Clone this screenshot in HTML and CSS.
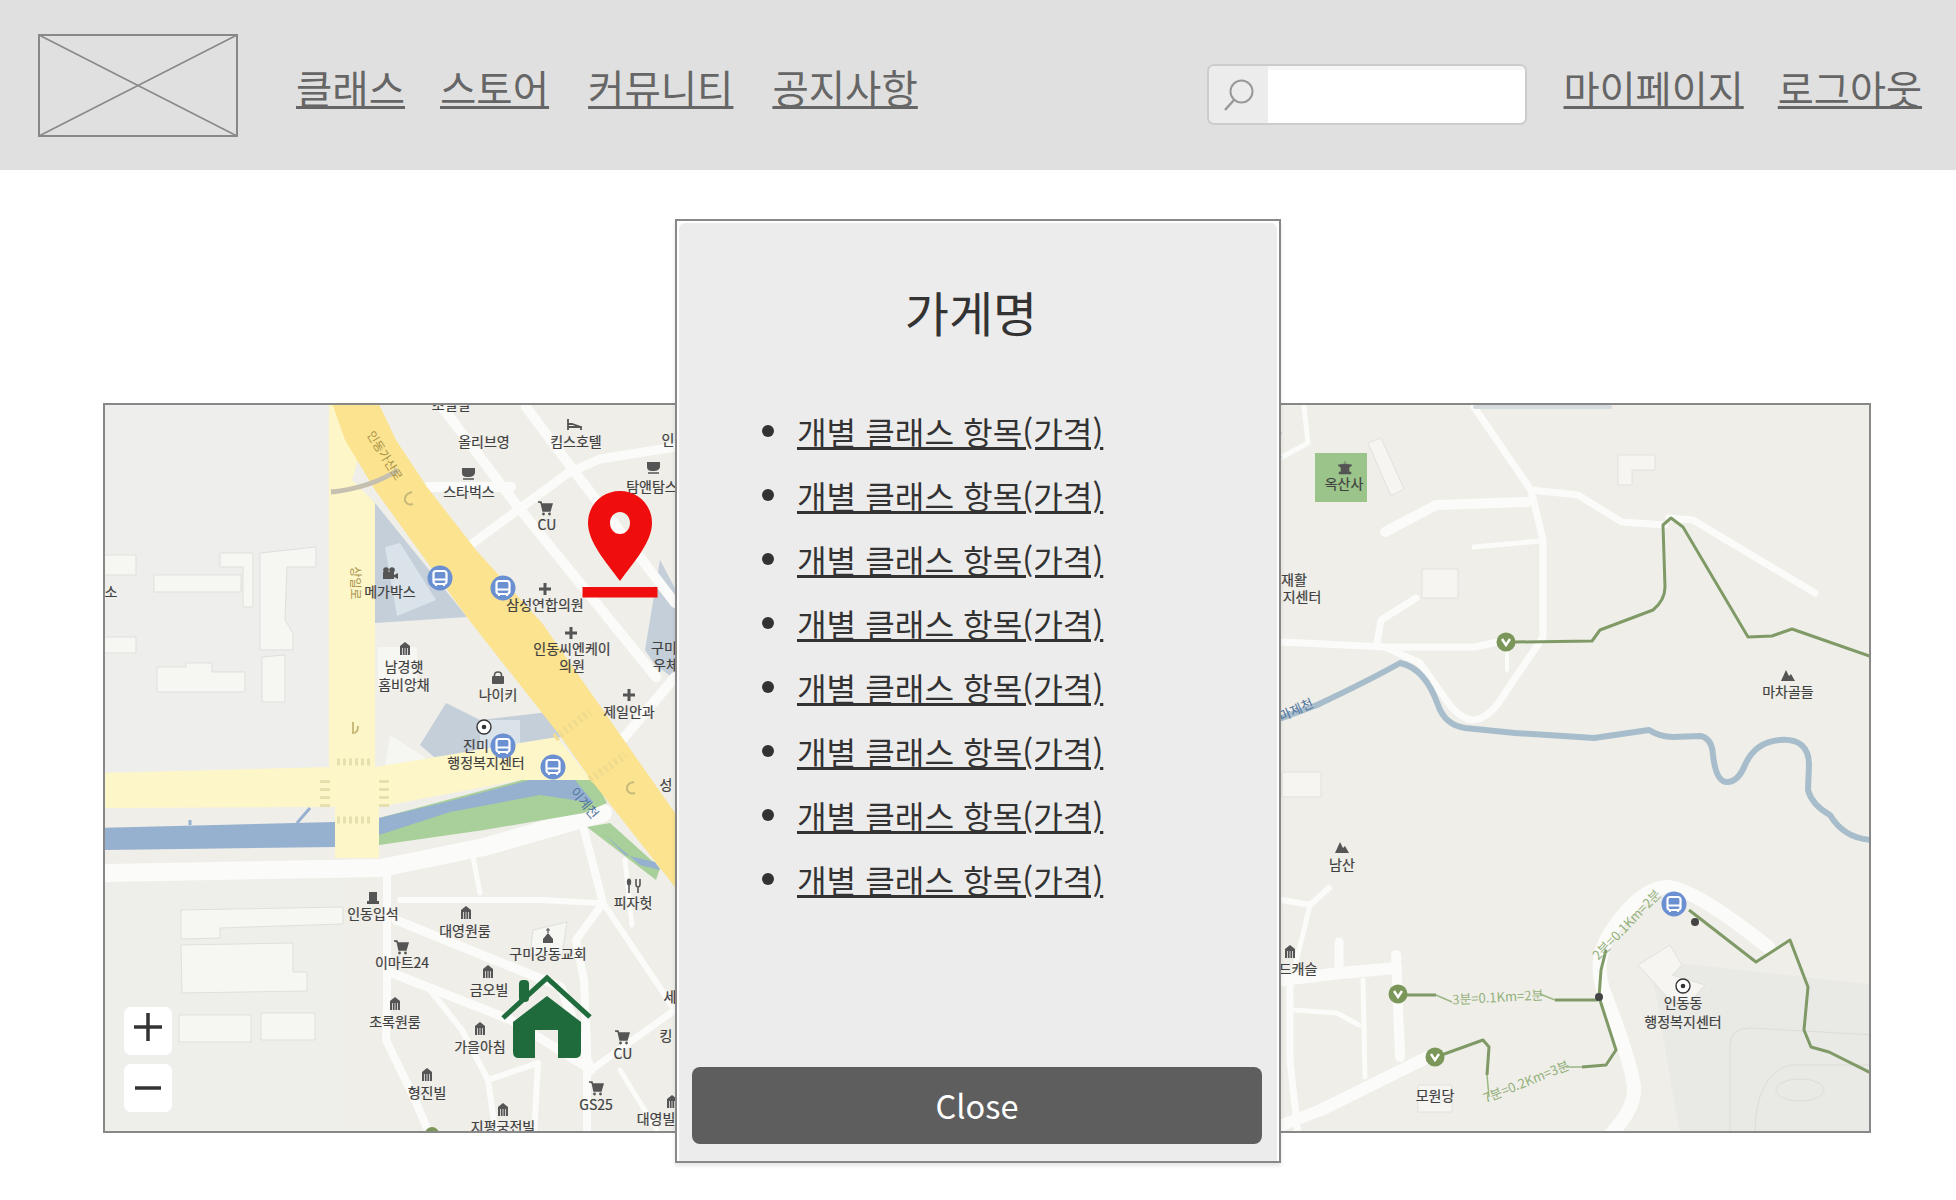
FILE: index.html
```html
<!DOCTYPE html>
<html lang="ko">
<head>
  <meta charset="UTF-8" />
  <meta name="viewport" content="width=device-width, initial-scale=1.0"/>
  <title>클래스 지도</title>
  <link rel="stylesheet" href="styles.css">
</head>
<body>

  <header class="topbar">
    <a class="logo" href="#">
      <svg viewBox="0 0 200 103" preserveAspectRatio="none">
        <rect x="1" y="1" width="198" height="101" fill="none" stroke="#888" stroke-width="2"/>
        <path d="M1 1 L199 102 M199 1 L1 102" stroke="#888" stroke-width="1.5"/>
      </svg>
    </a>
    <nav class="main-nav">
      <a href="#">클래스</a>
      <a href="#">스토어</a>
      <a href="#">커뮤니티</a>
      <a href="#">공지사항</a>
    </nav>
    <div class="search">
      <span class="search-icon">
        <svg width="36" height="36" viewBox="0 0 36 36">
          <circle cx="21.5" cy="14.5" r="11" fill="none" stroke="#999" stroke-width="2"/>
          <path d="M14 23 L5 33" stroke="#999" stroke-width="2.5"/>
        </svg>
      </span>
      <input class="search-input" type="text" />
    </div>
    <nav class="user-nav">
      <a href="#">마이페이지</a>
      <a href="#">로그아웃</a>
    </nav>
  </header>

  <main class="content">
    <div class="map">
      <svg class="map-img" viewBox="105 405 1764 726">
        <defs>
          <g id="ic-bus">
            <circle r="12.5" fill="#6b90d2"/>
            <rect x="-6.5" y="-7" width="13" height="13" rx="2.5" fill="none" stroke="#fff" stroke-width="2.2"/>
            <path d="M-6 1.5 H6" stroke="#fff" stroke-width="2"/>
            <path d="M-5 7 H-3 M3 7 H5" stroke="#fff" stroke-width="2"/>
          </g>
          <g id="ic-house">
            <path d="M0 -7 L5 -3 V6 H-5 V-3 Z" fill="#555"/>
            <path d="M-2.5 -1 V6 M0 -1 V6 M2.5 -1 V6" stroke="#eee" stroke-width="0.8"/>
          </g>
          <g id="ic-plus">
            <path d="M0 -6 V6 M-6 0 H6" stroke="#555" stroke-width="3"/>
          </g>
          <g id="ic-cart">
            <path d="M-7 -6 H-4 L-2 3 H5 L7 -4 H-3" fill="#555" stroke="#555" stroke-width="1.5"/>
            <circle cx="-1.5" cy="6" r="1.4" fill="#555"/>
            <circle cx="4.5" cy="6" r="1.4" fill="#555"/>
          </g>
          <g id="ic-cup">
            <path d="M-7 -5 H6 V0 Q5 4 0 4 H-2 Q-7 4 -7 0 Z" fill="#555"/>
            <path d="M-6 6 H5" stroke="#555" stroke-width="1.5"/>
          </g>
          <g id="ic-target">
            <circle r="7" fill="#fff" stroke="#333" stroke-width="1.4"/>
            <circle r="2.3" fill="#333"/>
          </g>
          <g id="ic-peak">
            <path d="M-7 5 L-2 -6 L1 0 L3 -2 L7 5 Z" fill="#555"/>
          </g>
          <g id="ic-stop">
            <circle r="9.5" fill="#7a9659"/>
            <path d="M-4 -3 L0 3 L4 -3" fill="none" stroke="#fff" stroke-width="2.4"/>
          </g>
          <g id="ic-bed">
            <path d="M-6 -6 V5 M-6 2 H7 V5 M-6 -1 H-2 L7 2" fill="none" stroke="#555" stroke-width="1.8"/>
          </g>
          <g id="ic-camera">
            <circle cx="-4" cy="-4" r="2.8" fill="#555"/>
            <circle cx="2" cy="-4" r="2.8" fill="#555"/>
            <rect x="-7" y="-2" width="11" height="7" fill="#555"/>
            <path d="M4 1 L8 -1 V5 L4 3 Z" fill="#555"/>
          </g>
          <g id="ic-fork">
            <path d="M-4 -7 V7 M3 -7 V-2 Q3 1 5 1 Q7 1 7 -2 V-7 M5 1 V7" fill="none" stroke="#555" stroke-width="1.6"/>
            <ellipse cx="-4" cy="-4" rx="2.2" ry="3.5" fill="#555"/>
          </g>
          <g id="ic-stone">
            <path d="M-4 -6 H4 V3 H-4 Z M-6 3 H6 V6 H-6 Z" fill="#555"/>
          </g>
          <g id="ic-church">
            <path d="M0 -9 V-4 M-2 -7 H2" stroke="#555" stroke-width="1.2"/>
            <path d="M0 -4 L5 2 V6 H-5 V2 Z" fill="#555"/>
          </g>
          <g id="ic-shop">
            <path d="M-3.5 -2 V-3 Q-3.5 -6 0 -6 Q3.5 -6 3.5 -3 V-2" fill="none" stroke="#555" stroke-width="1.6"/>
            <rect x="-6" y="-2" width="12" height="8" rx="1" fill="#555"/>
          </g>
          <g id="ic-temple">
            <path d="M-7 -3 Q0 -5 7 -3 L5 -1 H-5 Z M-4 -1 H4 V4 H-4 Z M-6 4 H6 V6 H-6 Z M0 -7 V-4" fill="#555" stroke="#555" stroke-width="0.6"/>
          </g>
        </defs>

        <rect x="100" y="400" width="1775" height="735" fill="#efeee8"/>

        <!-- left blocks -->
        <path d="M100 400 H327 V764 Q327 772 319 772 L100 774 Z" fill="#eeeeec"/>
        <path d="M100 880 H340 V1135 H100 Z" fill="#eeeeeb"/>
        <path d="M375 503 L467 617 L375 623 Z" fill="#c4cfda"/>
        <path d="M385 547 L400 543 L436 600 L397 616 Z" fill="#dbe3ea"/>
        <path d="M420 745 L446 703 L480 720 L557 711 L561 737 L475 750 L440 762 Z" fill="#c4cfda"/>
        <path d="M480 720 H520 V745 L480 750 Z" fill="#dbe3ea"/>
        <path d="M390 735 L445 770 L385 765 Z" fill="#f6f6f3"/>
        <path d="M660 560 L676 590 V680 L655 665 L645 650 Z" fill="#c4cfda"/>

        <!-- roads left -->
        <g fill="none" stroke="#fbfbf9" stroke-linecap="round" stroke-linejoin="round">
          <path d="M100 873 L381 868 L484 847 L603 813" stroke-width="18"/>
          <path d="M387 873 L387 1010 L386 1040 L415 1100 L430 1135" stroke-width="8"/>
          <path d="M442 407 L515 503 L656 677" stroke-width="10"/>
          <path d="M526 407 L568 463 L675 603" stroke-width="10"/>
          <path d="M427 487 L511 487" stroke-width="10"/>
          <path d="M473 543 L568 473 L600 459 L675 447" stroke-width="9"/>
          <path d="M622 740 L675 677" stroke-width="10"/>
          <path d="M396 920 L561 987 L591 1070" stroke-width="9"/>
          <path d="M392 973 L511 1020 L591 1070" stroke-width="9"/>
          <path d="M584 830 L603 903 L576 940 L584 980 L587 1047 L587 1135" stroke-width="8"/>
          <path d="M400 900 L540 900 L599 903" stroke-width="6"/>
          <path d="M473 857 L480 893" stroke-width="5"/>
          <path d="M675 1010 L591 1070" stroke-width="7"/>
          <path d="M430 990 L462 1030 L488 1080 L496 1135" stroke-width="6"/>
          <path d="M488 1080 L538 1063 L534 1135" stroke-width="6"/>
          <path d="M603 903 L675 1010" stroke-width="6"/>
          <path d="M620 1070 L660 1135" stroke-width="5"/>
          <path d="M625 860 L632 925" stroke-width="5"/>
        </g>

        <!-- water left -->
        <path d="M100 828 L335 822 V847 L100 850 Z" fill="#96b0cf"/>
        <path d="M190 820 V825 M310 808 L297 823" stroke="#96b0cf" stroke-width="3" fill="none"/>
        <path d="M379 818 L522 780 L595 780 L607 803 L584 813 L484 830 L379 845 Z" fill="#a9cf9a"/>
        <path d="M379 818 L450 801 L530 780 L575 780 L594 803 L540 795 L450 812 L379 835 Z" fill="#96b0cf"/>
        <path d="M587 827 L610 823 L660 868 L656 880 Z" fill="#a9cf9a"/>
        <path d="M605 835 L625 855 L655 862 L660 870 L640 865 Z" fill="#96b0cf"/>

        <!-- yellow roads -->
        <path d="M329 400 H375 L352 480 L375 503 V767 L557 737 L591 780 L520 780 L379 807 V858 L335 858 V807 L100 808 V773 L329 767 Z" fill="#fdf6c8"/>
        <path d="M331 400 H377 L396 440 L427 487 L476 550 L542 623 L675 813 V887 L591 780 L561 737 L469 620 L375 490 L345 440 Z" fill="#fbe38f"/>
        <path d="M331 492 Q370 488 398 470" fill="none" stroke="#c5c0af" stroke-width="5"/>
        <path d="M337 762 H372 M337 820 H372" stroke="#e6dfae" stroke-width="7" stroke-dasharray="3 3" fill="none"/>
        <path d="M325 780 V810 M384 780 V810" stroke="#e6dfae" stroke-width="10" stroke-dasharray="3 5" fill="none"/>
        <path d="M555 738 L590 712 M590 780 L625 755" stroke="#f0dc8e" stroke-width="8" stroke-dasharray="3 3" fill="none"/>
        <g fill="none" stroke="#c9bb7c" stroke-width="2">
          <path d="M412 492 Q404 494 405 501 Q408 506 413 504"/>
          <path d="M353 722 V733 Q358 733 358 726"/>
          <path d="M634 782 Q626 783 627 790 Q630 795 635 793"/>
        </g>

        <!-- buildings left -->
        <g fill="#f6f6f3" stroke="#dfdfdb">
          <path d="M100 555 H136 V575 H100 Z"/>
          <path d="M154 575 H241 V592 H154 Z"/>
          <path d="M260 553 L316 547 V567 L287 567 L285 620 L293 633 V650 H260 Z"/>
          <path d="M220 553 H253 V607 H243 V567 H220 Z"/>
          <path d="M100 637 H136 V653 H100 Z"/>
          <path d="M157 667 H186 V663 H212 V672 H245 V692 H157 Z"/>
          <path d="M262 657 L285 655 V702 H262 Z"/>
          <path d="M181 910 L343 907 V924 L220 928 V938 L181 939 Z"/>
          <path d="M181 945 L293 943 V972 H307 V991 L182 993 Z"/>
          <path d="M179 1015 H251 V1042 H179 Z"/>
          <path d="M261 1013 H315 V1040 H261 Z"/>
          <path d="M533 930 L567 922 L562 955 L530 955 Z"/>
          <path d="M378 647 H417 V690 H378 Z" stroke="none"/>
        </g>

        <!-- right side -->
        <path d="M1650 960 L1875 985 V1135 H1680 Z" fill="#e9e9e6"/>
        <rect x="1315" y="453" width="52" height="49" fill="#9bc48a"/>
        <g fill="#f6f5f1" stroke="#e2e1dc">
          <path d="M1368 443 L1381 438 L1404 489 L1391 496 Z"/>
          <path d="M1618 455 H1655 V470 H1632 V485 H1618 Z"/>
          <path d="M1422 569 H1458 V598 H1422 Z"/>
          <path d="M1282 772 H1321 V797 H1282 Z"/>
          <path d="M1638 965 L1670 945 L1682 965 L1672 975 L1705 985 L1690 1002 L1670 1000 Z"/>
          <path d="M1418 1085 H1452 V1112 H1418 Z"/>
        </g>
        <ellipse cx="1800" cy="1090" rx="24" ry="11" fill="none" stroke="#dcdcd8"/>
        <path d="M1730 1135 V1045 Q1730 1028 1750 1028 L1875 1035 M1755 1135 Q1755 1075 1790 1065 L1875 1065" fill="none" stroke="#dcdcd8"/>

        <g fill="none" stroke="#fbfbf9" stroke-linecap="round" stroke-linejoin="round">
          <path d="M1474 407 L1531 490 L1543 540 L1543 637 L1507 690 Q1490 720 1472 720 Q1458 718 1444 697 L1420 663 L1385 647 L1282 642" stroke-width="7"/>
          <path d="M1531 490 L1578 495 L1622 522 L1665 525" stroke-width="7"/>
          <path d="M1527 502 L1436 505 L1385 532" stroke-width="10"/>
          <path d="M1474 547 L1539 541" stroke-width="5"/>
          <path d="M1669 518 L1693 520 L1815 593" stroke-width="7"/>
          <path d="M1683 527 L1748 637" stroke-width="3"/>
          <path d="M1282 457 L1308 443 L1304 407" stroke-width="5"/>
          <path d="M1416 598 L1381 620 L1377 643" stroke-width="7"/>
          <path d="M1385 647 L1475 647 L1507 640" stroke-width="7"/>
          <path d="M1507 647 V670" stroke-width="4"/>
          <path d="M1282 900 L1310 905 L1329 888" stroke-width="6"/>
          <path d="M1310 905 L1294 970" stroke-width="5"/>
          <path d="M1282 980 L1341 973 L1396 968" stroke-width="12"/>
          <path d="M1339 942 V973" stroke-width="9"/>
          <path d="M1396 955 L1400 1057" stroke-width="10"/>
          <path d="M1282 1125 L1321 1110 L1428 1057" stroke-width="12"/>
          <path d="M1290 980 V1060 L1298 1135" stroke-width="7"/>
          <path d="M1363 980 L1365 1077" stroke-width="5"/>
          <path d="M1294 1010 L1337 1013 L1359 1025" stroke-width="5"/>
          <path d="M1610 1135 Q1634 1110 1634 1090 Q1634 1070 1606 997 Q1590 960 1614 927 Q1640 890 1665 887 Q1690 885 1768 947" stroke-width="14"/>
        </g>

        <!-- streams -->
        <g fill="none" stroke="#a7bdcb" stroke-linejoin="round" stroke-linecap="round">
          <path d="M1282 718 L1317 705 Q1370 680 1400 663 Q1425 668 1438 705 Q1445 725 1465 728 L1515 733 L1594 738 L1649 730 Q1660 737 1673 737 L1700 736 Q1712 738 1713 755 Q1716 782 1727 782 Q1738 782 1745 765 Q1755 742 1780 740 Q1809 738 1809 765 L1808 790 Q1812 805 1830 815 Q1845 840 1875 840" stroke-width="6"/>
          <path d="M1475 407 L1610 407" stroke-width="4" stroke="#d5dcdd"/>
        </g>
        <path d="M1280 432 Q1277 445 1280 458" stroke="#6b90d2" stroke-width="3" fill="none"/>

        <!-- trails -->
        <g fill="none" stroke="#7f9a66" stroke-width="3" stroke-linejoin="round">
          <path d="M1515 642 L1592 641 L1600 630 L1653 610 Q1665 600 1665 587 L1663 525 L1671 518 L1683 527 L1748 637 L1772 636 L1792 629 L1875 658"/>
          <path d="M1404 995 H1436"/>
          <path d="M1555 1000 H1598"/>
          <path d="M1599 997 L1601 970 L1606 950"/>
          <path d="M1689 910 L1756 962 L1790 940 L1808 987 L1804 1030 L1811 1047 L1829 1052 L1875 1075"/>
          <path d="M1599 997 L1616 1050 L1606 1065 L1582 1067"/>
          <path d="M1436 1057 L1483 1040 L1489 1047 L1487 1075"/>
        </g>
        <path d="M1436 995 L1452 1002 M1540 994 L1555 1000 M1487 1075 L1489 1097 M1566 1067 L1582 1067" fill="none" stroke="#9ab884" stroke-width="1.5"/>
        <g class="trail-label">
          <text transform="translate(1498 1002) rotate(-3)">3분=0.1Km=2분</text>
          <text transform="translate(1630 928) rotate(-46)">2분=0.1Km=2분</text>
          <text transform="translate(1528 1086) rotate(-22)">7분=0.2Km=3분</text>
        </g>

        <!-- labels left -->
        <g class="map-label">
          <text x="451" y="410">조일빌</text>
          <text x="484" y="447">올리브영</text>
          <text x="576" y="447">킴스호텔</text>
          <text x="668" y="445">인</text>
          <text x="469" y="497">스타벅스</text>
          <text x="652" y="492">탐앤탐스</text>
          <text x="547" y="530">CU</text>
          <text x="390" y="597">메가박스</text>
          <text x="545" y="610">삼성연합의원</text>
          <text x="572" y="653.5">인동씨엔케이</text>
          <text x="572" y="670.5">의원</text>
          <text x="664" y="653">구미</text>
          <text x="666" y="670">우체</text>
          <text x="404" y="672">남경햇</text>
          <text x="404" y="690">홈비앙채</text>
          <text x="498" y="700">나이키</text>
          <text x="629" y="717">제일안과</text>
          <text x="476" y="751">진미</text>
          <text x="486" y="768">행정복지센터</text>
          <text x="111" y="597">소</text>
          <text x="666" y="790">성</text>
          <text x="633" y="908">피자헛</text>
          <text x="373" y="919">인동입석</text>
          <text x="465" y="936">대영원룸</text>
          <text x="548" y="959">구미강동교회</text>
          <text x="402" y="968">이마트24</text>
          <text x="489" y="995">금오빌</text>
          <text x="395" y="1027">초록원룸</text>
          <text x="480" y="1052">가을아침</text>
          <text x="427" y="1098">형진빌</text>
          <text x="503" y="1132">지평궁전빌</text>
          <text x="623" y="1059">CU</text>
          <text x="596" y="1110">GS25</text>
          <text x="656" y="1124">대영빌</text>
          <text x="670" y="1002">세</text>
          <text x="666" y="1041">킹</text>
          <text x="1344" y="489">옥산사</text>
          <text x="1294" y="585">재활</text>
          <text x="1302" y="602">지센터</text>
          <text x="1788" y="697">마차골들</text>
          <text x="1342" y="870">남산</text>
          <text x="1298" y="974">드캐슬</text>
          <text x="1683" y="1008">인동동</text>
          <text x="1683" y="1027">행정복지센터</text>
          <text x="1435" y="1101">모원당</text>
        </g>
        <g class="road-label">
          <text transform="translate(381 458) rotate(58)">인동가산로</text>
          <text transform="translate(351 583) rotate(90)">상일로</text>
        </g>
        <g class="water-label">
          <text transform="translate(581 806) rotate(50)">이계천</text>
          <text transform="translate(1298 714) rotate(-24)">마제천</text>
        </g>

        <!-- map icons -->
        <use href="#ic-bed" x="574" y="425"/>
        <use href="#ic-cup" x="469" y="473"/>
        <use href="#ic-cup" x="654" y="467"/>
        <use href="#ic-cart" x="545" y="508"/>
        <use href="#ic-camera" x="390" y="574"/>
        <use href="#ic-plus" x="545" y="589"/>
        <use href="#ic-plus" x="571" y="633"/>
        <use href="#ic-house" x="405" y="649"/>
        <use href="#ic-shop" x="498" y="678"/>
        <use href="#ic-plus" x="629" y="695"/>
        <use href="#ic-target" x="484" y="727"/>
        <use href="#ic-fork" x="633" y="886"/>
        <use href="#ic-stone" x="373" y="898"/>
        <use href="#ic-house" x="466" y="913"/>
        <use href="#ic-church" x="548" y="937"/>
        <use href="#ic-cart" x="401" y="947"/>
        <use href="#ic-house" x="488" y="972"/>
        <use href="#ic-house" x="395" y="1004"/>
        <use href="#ic-house" x="480" y="1029"/>
        <use href="#ic-house" x="427" y="1075"/>
        <use href="#ic-house" x="503" y="1110"/>
        <use href="#ic-cart" x="622" y="1037"/>
        <use href="#ic-cart" x="596" y="1088"/>
        <use href="#ic-house" x="672" y="1102"/>
        <use href="#ic-temple" x="1345" y="468"/>
        <use href="#ic-peak" x="1788" y="676"/>
        <use href="#ic-peak" x="1342" y="848"/>
        <use href="#ic-house" x="1290" y="952"/>
        <use href="#ic-target" x="1683" y="986"/>
        <use href="#ic-bus" x="440" y="578"/>
        <use href="#ic-bus" x="503" y="588"/>
        <use href="#ic-bus" x="503" y="746"/>
        <use href="#ic-bus" x="553" y="767"/>
        <use href="#ic-bus" x="1674" y="904"/>
        <use href="#ic-stop" x="1506" y="642"/>
        <use href="#ic-stop" x="1398" y="994"/>
        <use href="#ic-stop" x="1435" y="1057"/>
        <circle cx="1599" cy="997" r="4" fill="#444"/>
        <circle cx="1695" cy="922" r="4" fill="#444"/>
        <circle cx="432" cy="1134" r="7" fill="#7a9659"/>

        <!-- red pin -->
        <path fill-rule="evenodd" fill="#f00d0d" d="M620 491 C602 491 588 505 588 523 C588 542 606 562 620 581 C634 562 652 542 652 523 C652 505 638 491 620 491 Z M620 512 C626 512 630 517 630 523 C630 529 626 534 620 534 C614 534 610 529 610 523 C610 517 614 512 620 512 Z"/>
        <rect x="582.5" y="587" width="75" height="10.5" fill="#f00d0d"/>

        <!-- home -->
        <path d="M503 1018 L547 978 L590 1017" fill="none" stroke="#1f6b3c" stroke-width="5"/>
        <rect x="519" y="980" width="10" height="22" rx="4" fill="#1f6b3c"/>
        <path fill="#1f6b3c" d="M547 996 L581 1022 V1052 Q581 1058 575 1058 H558 V1030 H535 V1058 H519 Q513 1058 513 1052 V1022 Z"/>
      </svg>

      <div class="zoom-ctrl">
        <button class="zoom-btn zoom-in" type="button" aria-label="확대">
          <svg width="28" height="28" viewBox="0 0 28 28"><path d="M14 0 V28 M0 14 H28" stroke="#333" stroke-width="3.5"/></svg>
        </button>
        <button class="zoom-btn" type="button" aria-label="축소">
          <svg width="26" height="6" viewBox="0 0 26 6"><path d="M0 3 H26" stroke="#333" stroke-width="3.5"/></svg>
        </button>
      </div>
    </div>

    <div class="modal">
      <div class="modal-body">
        <h2 class="modal-title">가게명</h2>
        <ul class="class-list">
          <li><a href="#">개별 클래스 항목(가격)</a></li>
          <li><a href="#">개별 클래스 항목(가격)</a></li>
          <li><a href="#">개별 클래스 항목(가격)</a></li>
          <li><a href="#">개별 클래스 항목(가격)</a></li>
          <li><a href="#">개별 클래스 항목(가격)</a></li>
          <li><a href="#">개별 클래스 항목(가격)</a></li>
          <li><a href="#">개별 클래스 항목(가격)</a></li>
          <li><a href="#">개별 클래스 항목(가격)</a></li>
        </ul>
        <button class="close-btn" type="button">Close</button>
      </div>
    </div>
  </main>

</body>
</html>
```

FILE: styles.css
```css
* {
  box-sizing: border-box;
}

body {
  margin: 0;
  background: #fff;
  font-family: "Noto Sans CJK KR", "Noto Sans", sans-serif;
  color: #333;
  overflow: hidden;
}

a {
  color: inherit;
}

.topbar {
  display: flex;
  align-items: center;
  height: 170px;
  padding: 0 34px 0 38px;
  background: #e0e0e0;
  color: #666;
}

.logo {
  display: block;
  width: 200px;
  height: 103px;
  margin-top: 1px;
}

.logo svg {
  display: block;
  width: 100%;
  height: 100%;
}

.main-nav {
  display: flex;
  gap: 39px;
  margin-left: 58px;
  font-size: 39.5px;
  line-height: 54px;
  padding-top: 4px;
}

.main-nav a:first-child {
  margin-right: -4px;
}

.search {
  display: flex;
  width: 320px;
  height: 61px;
  margin-left: auto;
  margin-top: 19px;
  border: 2px solid #ccc;
  border-radius: 7px;
  overflow: hidden;
}

.search-icon {
  display: flex;
  align-items: center;
  justify-content: center;
  width: 59px;
  background: #ececec;
}

.search-input {
  flex: 1;
  min-width: 0;
  border: 0;
  background: #fff;
  box-shadow: inset 0 4px 0 #f6f6f6;
}

.user-nav {
  display: flex;
  gap: 34px;
  margin-left: 37px;
  font-size: 39.2px;
  line-height: 54px;
  padding-top: 4px;
}

.content {
  position: relative;
  height: 1030px;
  padding: 233px 85px 0 103px;
}

.map {
  position: relative;
  height: 730px;
  border: 2px solid #888;
}

.map-img {
  display: block;
  width: 100%;
  height: 100%;
}

.map-label text {
  font-size: 14px;
  fill: #404040;
  stroke: #404040;
  stroke-width: 0.2px;
  text-anchor: middle;
}

.road-label text {
  font-size: 12px;
  fill: #a8924a;
  text-anchor: middle;
}

.water-label text {
  font-size: 13px;
  fill: #4f74a0;
  text-anchor: middle;
}

.trail-label text {
  font-size: 13px;
  fill: #93b07c;
  text-anchor: middle;
}

.zoom-ctrl {
  position: absolute;
  left: 19px;
  bottom: 19px;
  display: flex;
  flex-direction: column;
  gap: 9px;
}

.zoom-btn {
  display: flex;
  align-items: center;
  justify-content: center;
  width: 48px;
  height: 48px;
  padding: 0;
  border: 0;
  border-radius: 7px;
  background: #fff;
}

.zoom-in {
  padding-bottom: 8px;
}

.modal {
  position: absolute;
  top: 49px;
  left: 50%;
  width: 606px;
  height: 944px;
  margin-left: -303px;
  padding: 2px 2px 0 2px;
  border: 2px solid #888;
  background: #fff;
  box-shadow: 0 3px 4px rgba(0, 0, 0, 0.1);
}

.modal-body {
  display: flex;
  flex-direction: column;
  height: 100%;
  padding: 0 15px 17px 13px;
  background: #ececec;
  border-radius: 6px 6px 0 0;
}

.modal-title {
  margin: 55px 0 0;
  padding-right: 12px;
  font-size: 48px;
  font-weight: 400;
  line-height: 66px;
  text-align: center;
}

.class-list {
  margin: 55px 0 0;
  padding: 0 0 0 70px;
  list-style: none;
  font-size: 32.2px;
  line-height: 64px;
}

.class-list li {
  display: flex;
  align-items: center;
  gap: 23px;
}

.class-list li::before {
  content: "";
  width: 12px;
  height: 12px;
  border-radius: 50%;
  background: #333;
}

.close-btn {
  margin-top: auto;
  height: 77px;
  padding-bottom: 4px;
  border: 0;
  border-radius: 8px;
  background: #5e5e5e;
  color: #fff;
  font-family: inherit;
  font-size: 32.5px;
}
```
